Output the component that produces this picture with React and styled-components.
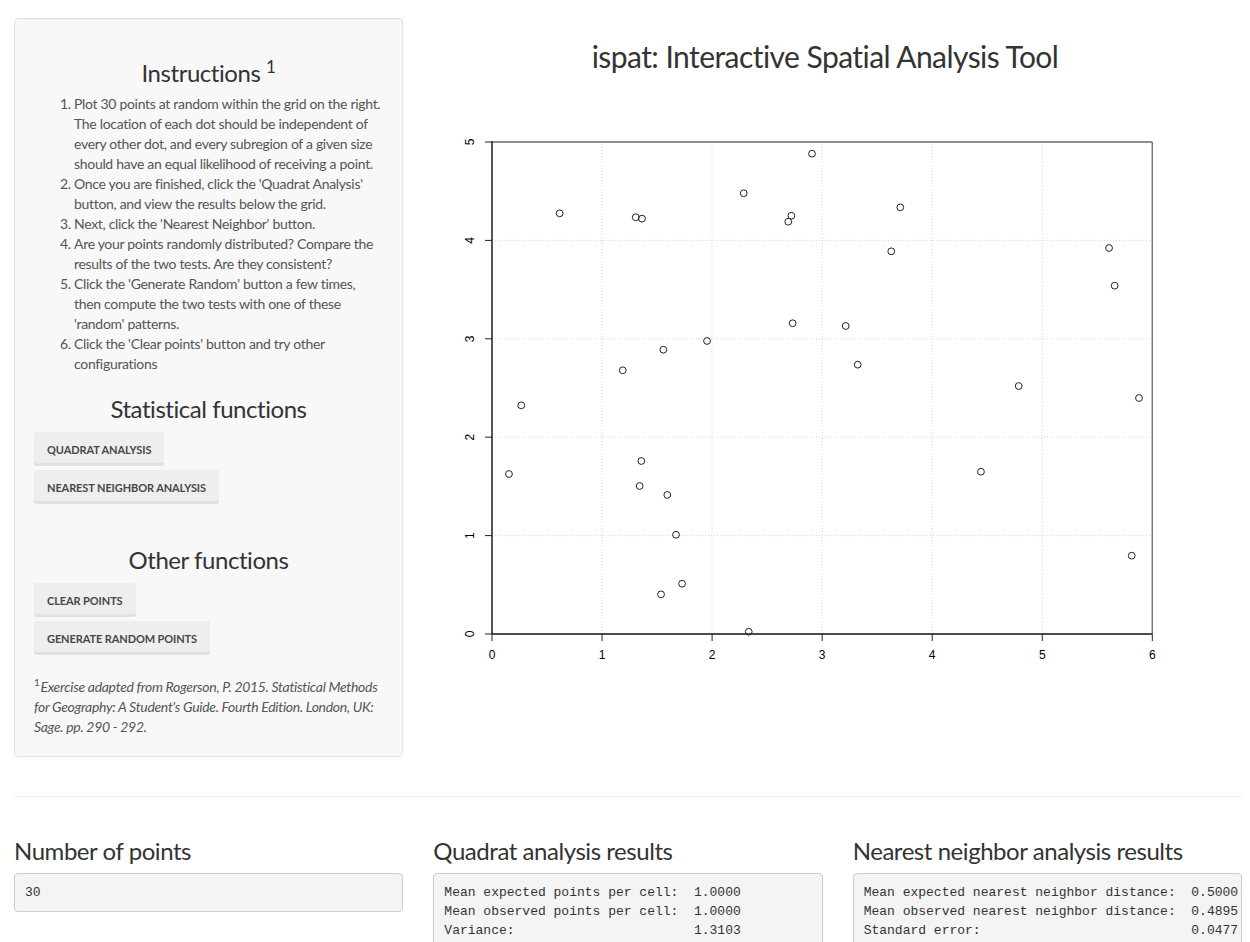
import React from "react";
import styled, { createGlobalStyle } from "styled-components";

const GlobalStyle = createGlobalStyle`
  html, body {
    margin: 0;
    padding: 0;
    background: #fff;
  }
  body {
    font-family: Lato, "Noto Sans", sans-serif;
    font-size: 14px;
    line-height: 20px;
    letter-spacing: -0.31px;
    color: #555;
  }
`;

const points = [
  [0.154, 1.626], [0.266, 2.324], [0.615, 4.275], [1.306, 4.235], [1.363, 4.221],
  [1.188, 2.68], [1.557, 2.889], [1.357, 1.758], [1.342, 1.504], [1.593, 1.413],
  [1.672, 1.009], [1.727, 0.511], [1.536, 0.403], [1.954, 2.978], [2.287, 4.479],
  [2.333, 0.023], [2.692, 4.19], [2.72, 4.251], [2.732, 3.158], [2.908, 4.881],
  [3.214, 3.13], [3.323, 2.737], [3.628, 3.889], [3.71, 4.336], [4.443, 1.649],
  [4.786, 2.52], [5.607, 3.923], [5.658, 3.54], [5.879, 2.398], [5.813, 0.796],
];

const steps = [
  "Plot 30 points at random within the grid on the right. The location of each dot should be independent of every other dot, and every subregion of a given size should have an equal likelihood of receiving a point.",
  "Once you are finished, click the 'Quadrat Analysis' button, and view the results below the grid.",
  "Next, click the 'Nearest Neighbor' button.",
  "Are your points randomly distributed? Compare the results of the two tests. Are they consistent?",
  "Click the 'Generate Random' button a few times, then compute the two tests with one of these 'random' patterns.",
  "Click the 'Clear points' button and try other configurations",
];

export default function App() {
  return (
    <>
      <GlobalStyle />
      <Page>
        <TopRow>
          <Sidebar>
            <PanelHeading $top={22}>
              Instructions <Sup>1</Sup>
            </PanelHeading>
            <Steps>
              {steps.map((s) => (
                <li key={s}>{s}</li>
              ))}
            </Steps>
            <PanelHeading $top={22}>Statistical functions</PanelHeading>
            <ButtonStack>
              <ActionButton>Quadrat Analysis</ActionButton>
              <ActionButton>Nearest Neighbor Analysis</ActionButton>
            </ButtonStack>
            <PanelHeading $top={43}>Other functions</PanelHeading>
            <ButtonStack>
              <ActionButton>Clear points</ActionButton>
              <ActionButton>Generate random points</ActionButton>
            </ButtonStack>
            <Footnote>
              <FootSup>1</FootSup>Exercise adapted from Rogerson, P. 2015. Statistical Methods
              for Geography: A Student's Guide. Fourth Edition. London, UK: Sage. pp. 290 - 292.
            </Footnote>
          </Sidebar>
          <MainPanel>
            <Title>ispat: Interactive Spatial Analysis Tool</Title>
            <ScatterPlot />
          </MainPanel>
        </TopRow>
        <Divider />
        <ResultsRow>
          <ResultCol>
            <ResultHeading>Number of points</ResultHeading>
            <Output>30</Output>
          </ResultCol>
          <ResultCol>
            <ResultHeading>Quadrat analysis results</ResultHeading>
            <Output>
              {"Mean expected points per cell:  1.0000\nMean observed points per cell:  1.0000\nVariance:                       1.3103"}
            </Output>
          </ResultCol>
          <ResultCol>
            <ResultHeading>Nearest neighbor analysis results</ResultHeading>
            <Output>
              {"Mean expected nearest neighbor distance:  0.5000\nMean observed nearest neighbor distance:  0.4895\nStandard error:                           0.0477"}
            </Output>
          </ResultCol>
        </ResultsRow>
      </Page>
    </>
  );
}

// plot geometry, in svg pixels
const X0 = 59;
const XU = 110.05;
const Y0 = 533;
const YU = 98.4;
const px = (v) => X0 + v * XU;
const py = (v) => Y0 - v * YU;

function ScatterPlot() {
  const xs = [0, 1, 2, 3, 4, 5, 6];
  const ys = [0, 1, 2, 3, 4, 5];
  return (
    <PlotSvg width="809" height="580" viewBox="0 0 809 580">
      {xs.slice(1, 6).map((v) => (
        <line key={"gx" + v} x1={px(v)} x2={px(v)} y1={py(0)} y2={py(5)} stroke="#d6d6d6" strokeDasharray="1 2" />
      ))}
      {ys.slice(1, 5).map((v) => (
        <line key={"gy" + v} x1={px(0)} x2={px(6)} y1={py(v)} y2={py(v)} stroke="#d6d6d6" strokeDasharray="1 2" />
      ))}
      <line x1={px(0)} x2={px(6)} y1={py(5)} y2={py(5)} stroke="#8c8c8c" strokeWidth="2" />
      <line x1={px(6)} x2={px(6)} y1={py(5)} y2={py(0)} stroke="#777" strokeWidth="1.5" />
      <line x1={px(0)} x2={px(0)} y1={py(5) - 1} y2={py(0)} stroke="#555" strokeWidth="2" />
      <line x1={px(0)} x2={px(6)} y1={py(0)} y2={py(0)} stroke="#111" strokeWidth="1.5" />
      {xs.map((v) => (
        <g key={"tx" + v}>
          <line x1={px(v)} x2={px(v)} y1={py(0)} y2={py(0) + 7} stroke="#222" />
          <AxisText x={px(v)} y={py(0) + 25} textAnchor="middle">
            {v}
          </AxisText>
        </g>
      ))}
      {ys.map((v) => (
        <g key={"ty" + v}>
          <line x1={px(0)} x2={px(0) - 7} y1={py(v)} y2={py(v)} stroke="#222" />
          <AxisText x={0} y={0} transform={`translate(${px(0) - 18}, ${py(v)}) rotate(-90)`} textAnchor="middle">
            {v}
          </AxisText>
        </g>
      ))}
      {points.map(([x, y], i) => (
        <circle key={i} cx={px(x)} cy={py(y)} r="3.4" fill="none" stroke="#222" strokeWidth="1" />
      ))}
    </PlotSvg>
  );
}

const Page = styled.div`
  padding: 18px 8px 0 14px;
`;

const TopRow = styled.div`
  display: grid;
  grid-template-columns: 389px 1fr;
  column-gap: 30px;
  align-items: start;
`;

const Sidebar = styled.div`
  background: #f8f8f8;
  border: 1px solid #e3e3e3;
  border-radius: 4px;
  box-shadow: inset 0 1px 1px rgba(0, 0, 0, 0.03);
  padding: 19px;
  display: flex;
  flex-direction: column;
`;

const PanelHeading = styled.h3`
  margin: ${(p) => p.$top}px 0 8px;
  font-size: 24px;
  font-weight: 400;
  line-height: 26px;
  letter-spacing: -0.45px;
  color: #333;
  text-align: center;
`;

const Sup = styled.sup`
  font-size: 17px;
  line-height: 0;
  vertical-align: 9px;
`;

const Steps = styled.ol`
  margin: 0;
  padding-left: 40px;
  li {
    line-height: 20px;
  }
`;

const ButtonStack = styled.div`
  display: flex;
  flex-direction: column;
  align-items: flex-start;
  gap: 4px;
  margin-top: 2px;
`;

const ActionButton = styled.button`
  height: 34px;
  padding: 0 13px;
  border: none;
  border-radius: 3px;
  background: #eee;
  box-shadow: inset 0 -3px 0 #e1e1e1;
  color: #474747;
  font-family: Lato, "Noto Sans", sans-serif;
  font-size: 11px;
  font-weight: 700;
  letter-spacing: -0.1px;
  text-transform: uppercase;
  cursor: pointer;
`;

const Footnote = styled.p`
  margin: 22px 0 0;
  font-style: italic;
  color: #555;
  line-height: 20px;
`;

const FootSup = styled.sup`
  font-size: 10px;
  line-height: 0;
  vertical-align: 6px;
  margin-right: 1px;
  font-style: normal;
`;

const MainPanel = styled.div`
  display: flex;
  flex-direction: column;
`;

const Title = styled.h2`
  margin: 22px 0 0;
  padding-right: 25px;
  font-size: 30px;
  font-weight: 400;
  line-height: 33px;
  letter-spacing: -0.55px;
  color: #333;
  text-align: center;
`;

const PlotSvg = styled.svg`
  display: block;
  margin-top: 28px;
`;

const AxisText = styled.text`
  font-family: "Liberation Sans", Arial, sans-serif;
  font-size: 12px;
  letter-spacing: 0;
  fill: #000;
`;

const Divider = styled.hr`
  margin: 39px 0 0;
  border: none;
  border-top: 1px solid #eee;
`;

const ResultsRow = styled.div`
  display: grid;
  grid-template-columns: repeat(3, 1fr);
  column-gap: 30px;
  padding-top: 41px;
`;

const ResultCol = styled.div`
  min-width: 0;
`;

const ResultHeading = styled.h3`
  margin: 0 0 9px;
  font-size: 24px;
  font-weight: 400;
  line-height: 26px;
  letter-spacing: -0.45px;
  color: #333;
`;

const Output = styled.pre`
  margin: 0;
  padding: 9px 9px 9px 10px;
  background: #f4f4f4;
  border: 1px solid #ccc;
  border-radius: 4px;
  color: #333;
  font-family: "Liberation Mono", "Courier New", monospace;
  font-size: 13px;
  line-height: 19px;
  letter-spacing: 0;
  white-space: pre;
  overflow: hidden;
`;
